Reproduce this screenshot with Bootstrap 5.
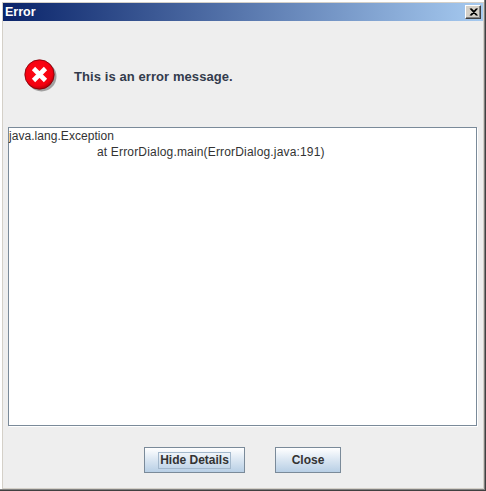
<!DOCTYPE html>
<html lang="en">
<head>
<meta charset="utf-8">
<title>Error</title>
<link href="https://cdn.jsdelivr.net/npm/bootstrap@5.3.0/dist/css/bootstrap.min.css" rel="stylesheet">
<style>
html,body{margin:0;padding:0;width:486px;height:491px;overflow:hidden;background:#d4d0c8;}
body{font-family:"Liberation Sans",Arial,sans-serif;}
.win-frame{width:486px;height:491px;background:#d4d0c8;border-right:1px solid #404040;border-bottom:1px solid #404040;box-shadow:inset -1px -1px 0 #808080,inset 2px 2px 0 #fff,inset 1px 1px 0 #d4d0c8;padding:3px 2px 2px 3px;}
.win-title{height:18px;background:linear-gradient(90deg,#0a246a,#a6caf0);color:#fff;font-size:12.5px;font-weight:700;padding:0 2px;line-height:18px;flex:none;}
.win-x{width:16px;height:14px;background:#d4d0c8;border:1px solid;border-color:#fff #404040 #404040 #fff;box-shadow:inset -1px -1px 0 #808080;}
.win-x svg{display:block;margin:2px 0 0 3px;}
.win-body{background:#eeeeee;}
.msg-row{height:106px;padding-left:21px;gap:16px;padding-top:3px;}
.msg-text{font-size:13px;font-weight:700;color:#333b4c;letter-spacing:.08px;padding-top:2px;}
.trace-wrap{padding:0 6px 0 5px;height:299px;}
.trace{height:299px;border:1px solid #7a8a99;background:#fff;box-shadow:1px 1px 0 #fff;padding:0;font-size:12px;line-height:16px;color:#333;white-space:pre;}
.trace-top{letter-spacing:.05px;}
.trace-ind{padding-left:88px;letter-spacing:.17px;}
.act-row{padding-top:21px;gap:30px;padding-right:1px;}
.act-btn{height:26px;border:1px solid #7a8a99;border-radius:0;background:linear-gradient(180deg,#fff 0%,#dde8f3 45%,#b8cfe5 100%);color:#333;font-size:12px;font-weight:700;padding:0;line-height:1;}
.act-hide{width:101px;}
.act-close{width:66px;}
.act-focus{display:inline-block;border:1px solid #a3b8cc;padding:0 1px;line-height:15px;}
</style>
</head>
<body>
<div class="win-frame d-flex flex-column">
  <div class="win-title d-flex align-items-center justify-content-between">
    <span>Error</span>
    <span class="win-x"><svg width="9" height="8" viewBox="0 0 9 8"><path d="M1 0.5 L7.5 7.5 M2.3 0.5 L8.5 7.5 M7.5 0.5 L1 7.5 M8.5 0.5 L2.3 7.5" stroke="#000" stroke-width="1.1" fill="none"/></svg></span>
  </div>
  <div class="win-body flex-grow-1 d-flex flex-column">
    <div class="msg-row d-flex align-items-center">
      <svg width="34" height="34" viewBox="0 0 34 34" class="flex-shrink-0">
        <defs><radialGradient id="rg" cx="45%" cy="40%" r="60%"><stop offset="0" stop-color="#ff0a14"/><stop offset="0.8" stop-color="#f40010"/><stop offset="1" stop-color="#b80008"/></radialGradient></defs>
        <circle cx="17.5" cy="17.5" r="15" fill="#a0a0a0"/>
        <circle cx="15.5" cy="15.5" r="14.7" fill="url(#rg)" stroke="#7a0008" stroke-width=".8"/>
        <path d="M9.5 9.5 L21.5 21.5 M21.5 9.5 L9.5 21.5" stroke="#fff" stroke-width="4.6" fill="none"/>
      </svg>
      <span class="msg-text">This is an error message.</span>
    </div>
    <div class="trace-wrap">
      <div class="trace"><div class="trace-top">java.lang.Exception</div><div class="trace-ind">at ErrorDialog.main(ErrorDialog.java:191)</div></div>
    </div>
    <div class="act-row d-flex justify-content-center">
      <button type="button" class="btn act-btn act-hide"><span class="act-focus">Hide Details</span></button>
      <button type="button" class="btn act-btn act-close">Close</button>
    </div>
  </div>
</div>
<script src="https://cdn.jsdelivr.net/npm/bootstrap@5.3.0/dist/js/bootstrap.bundle.min.js"></script>
</body>
</html>
